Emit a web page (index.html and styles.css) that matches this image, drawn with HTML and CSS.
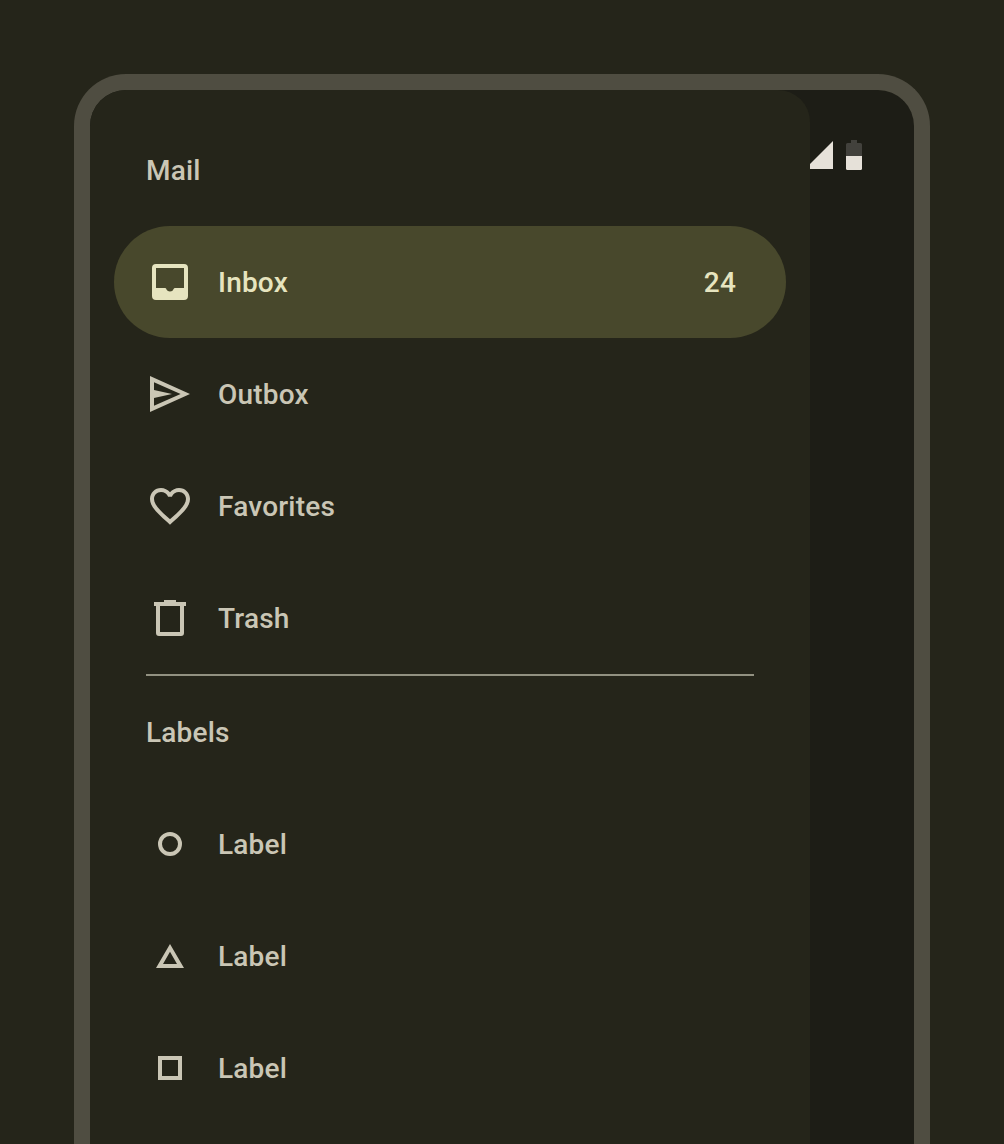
FILE: index.html
```html
<!DOCTYPE html>
<html lang="en">
<head>
<meta charset="utf-8">
<title>Mail</title>
<link rel="stylesheet" href="styles.css">
</head>
<body>
<div class="device">
  <nav class="drawer">
    <h2 class="heading">Mail</h2>
    <ul class="list">
      <li class="item item-active">
        <svg class="icon" viewBox="0 0 24 24"><path fill-rule="evenodd" d="M5 3H19Q21 3 21 5V19Q21 21 19 21H5Q3 21 3 19V5Q3 3 5 3ZM5 5V15H9.5Q10 15 10.1 15.4A2 2 0 0 0 13.9 15.4Q14 15 14.5 15H19V5Z"/></svg>
        <span class="label">Inbox</span><span class="count">24</span>
      </li>
      <li class="item">
        <svg class="icon" viewBox="0 0 24 24"><path fill-rule="evenodd" d="M2 3L22 12L2 21ZM4 6.1V10L13 12L4 14V17.9L17.3 12Z"/></svg>
        <span class="label">Outbox</span>
      </li>
      <li class="item">
        <svg class="icon" viewBox="0 0 24 24"><path d="M16.5 3c-1.74 0-3.41.81-4.5 2.09C10.91 3.81 9.24 3 7.5 3 4.42 3 2 5.42 2 8.5c0 3.78 3.4 6.86 8.55 11.54L12 21.35l1.45-1.32C18.6 15.36 22 12.28 22 8.5 22 5.42 19.58 3 16.5 3zm-4.4 15.55l-.1.1-.1-.1C7.14 14.24 4 11.39 4 8.5 4 6.5 5.5 5 7.5 5c1.54 0 3.04.99 3.57 2.36h1.87C13.46 5.99 14.96 5 16.5 5c2 0 3.5 1.5 3.5 3.5 0 2.89-3.14 5.74-7.9 10.05z"/></svg>
        <span class="label">Favorites</span>
      </li>
      <li class="item">
        <svg class="icon" viewBox="0 0 24 24"><path fill-rule="evenodd" d="M9 3H15V4H20V6H19V19.5Q19 21 17.5 21H6.5Q5 21 5 19.5V6H4V4H9ZM7 6V19H17V6Z"/></svg>
        <span class="label">Trash</span>
      </li>
    </ul>
    <hr class="divider">
    <h2 class="heading">Labels</h2>
    <ul class="list">
      <li class="item">
        <svg class="icon" viewBox="0 0 24 24"><circle class="outline" cx="12" cy="12" r="5"/></svg>
        <span class="label">Label</span>
      </li>
      <li class="item">
        <svg class="icon" viewBox="0 0 24 24"><path fill-rule="evenodd" d="M12 6L19 18H5ZM12 9.9L8.5 16H15.5Z"/></svg>
        <span class="label">Label</span>
      </li>
      <li class="item">
        <svg class="icon" viewBox="0 0 24 24"><rect class="outline" x="7" y="7" width="10" height="10"/></svg>
        <span class="label">Label</span>
      </li>
    </ul>
  </nav>
  <div class="status">
    <svg class="signal" viewBox="0 0 24 30"><path d="M0 24L23 1V29H0Z"/></svg>
    <svg class="battery" viewBox="0 0 16 30"><path class="battery-empty" d="M5 0H11V3H14.5Q16 3 16 4.5V16H0V4.5Q0 3 1.5 3H5Z"/><path d="M0 16H16V28.5Q16 30 14.5 30H1.5Q0 30 0 28.5Z"/></svg>
  </div>
</div>
</body>
</html>
```
FILE: styles.css
```css
* {
  box-sizing: border-box;
}

body {
  margin: 0;
  height: 1144px;
  padding: 74px 74px 0;
  background: #25251a;
  color: #cac6b5;
  font: 500 28px/40px Roboto, sans-serif;
  letter-spacing: 0.2px;
}

.device {
  display: flex;
  width: 856px;
  height: 1070px;
  overflow: hidden;
  border: 16px solid #4f4d41;
  border-bottom: 0;
  border-radius: 52px 52px 0 0;
  background: #1d1d16;
}

.drawer {
  width: 720px;
  padding: 24px 24px 0;
  border-radius: 0 32px 0 0;
  background: #25251a;
}

.heading {
  display: flex;
  align-items: center;
  height: 112px;
  margin: 0;
  padding: 2px 0 0 32px;
  font: inherit;
}

.list {
  margin: 0;
  padding: 0;
  list-style: none;
}

.item {
  display: flex;
  align-items: center;
  gap: 24px;
  height: 112px;
  padding: 0 50px 0 32px;
  border-radius: 56px;
}

.item-active {
  background: #48482c;
  color: #e6e4bf;
}

.icon {
  width: 48px;
  height: 48px;
  fill: currentColor;
}

.outline {
  fill: none;
  stroke: currentColor;
  stroke-width: 2;
}

.label,
.count {
  padding-top: 2px;
}

.label {
  flex: 1;
}

.divider {
  height: 2px;
  margin: 0 32px;
  border: 0;
  background: #929181;
}

.status {
  display: flex;
  gap: 12px;
  padding-top: 50px;
  fill: #e6e1d9;
}

.signal {
  width: 24px;
  height: 30px;
}

.battery {
  width: 16px;
  height: 30px;
}

.battery-empty {
  fill: #42413c;
}
```
